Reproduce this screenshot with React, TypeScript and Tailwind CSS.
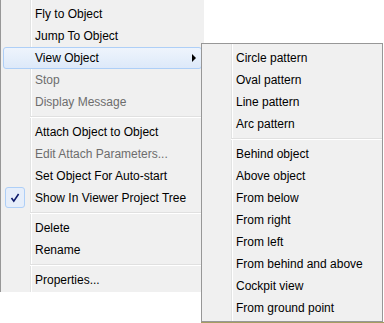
import React from "react";

type Item = { t?: string; dis?: boolean; hl?: boolean; sub?: boolean; check?: boolean; sep?: boolean };

const mainItems: Item[] = [
  { t: "Fly to Object" },
  { t: "Jump To Object" },
  { t: "View Object", hl: true, sub: true },
  { t: "Stop", dis: true },
  { t: "Display Message", dis: true },
  { sep: true },
  { t: "Attach Object to Object" },
  { t: "Edit Attach Parameters...", dis: true },
  { t: "Set Object For Auto-start" },
  { t: "Show In Viewer Project Tree", check: true },
  { sep: true },
  { t: "Delete" },
  { t: "Rename" },
  { sep: true },
  { t: "Properties..." },
];

const subItems: Item[] = [
  { t: "Circle pattern" },
  { t: "Oval pattern" },
  { t: "Line pattern" },
  { t: "Arc pattern" },
  { sep: true },
  { t: "Behind object" },
  { t: "Above object" },
  { t: "From below" },
  { t: "From right" },
  { t: "From left" },
  { t: "From behind and above" },
  { t: "Cockpit view" },
  { t: "From ground point" },
];

function Row({ it }: { it: Item }) {
  if (it.sep) {
    return (
      <div className="h-[8px] flex items-center pl-[29px]">
        <div className="w-full h-[2px] border-t border-t-[#e0e0e0] border-b border-b-white" />
      </div>
    );
  }
  return (
    <div
      className={
        "relative h-[22px] mx-[2px] rounded-[3px] border flex items-center pl-[31px] pr-[5px] " +
        (it.hl
          ? "border-[#aecff7] bg-[linear-gradient(to_bottom,#eef4fc,#dde9f9)]"
          : "border-transparent") +
        (it.dis ? " text-[#6d6d6d]" : " text-black")
      }
    >
      {it.check && (
        <div className="absolute left-[1px] top-[-1px] w-[20px] h-[21px] rounded-[3px] border border-[#aecff7] bg-[#e6eefa] flex items-center justify-center">
          <svg width="10" height="10" viewBox="0 0 10 10">
            <path d="M1.5 5 L3.8 8.2 L8.6 1" fill="none" stroke="#0d1a6b" strokeWidth="1.6" />
          </svg>
        </div>
      )}
      <span className="leading-none">{it.t}</span>
      {it.sub && (
        <svg className="ml-auto" width="4" height="8" viewBox="0 0 4 8">
          <path d="M0 0 L4 4 L0 8 Z" fill="#000" />
        </svg>
      )}
    </div>
  );
}

const gutterBg =
  "bg-[linear-gradient(to_right,#f0f0f0_29px,#e2e3e3_29px,#e2e3e3_30px,#ffffff_30px,#ffffff_31px,#f0f0f0_31px)]";

export default function App() {
  return (
    <div
      className="relative w-[384px] h-[323px] bg-white overflow-hidden text-[12px]"
      style={{ fontFamily: '"Liberation Sans", Arial, sans-serif' }}
    >
      <div className={"w-[204px] border-l border-l-[#979797] pt-[3px] pb-[1px] " + gutterBg}>
        {mainItems.map((it, i) => (
          <Row key={i} it={it} />
        ))}
      </div>
      <div className="absolute left-[201px] top-[43px] w-[183px] flex flex-col">
        <div className={"w-[182px] border border-[#979797] pt-[3px] pb-[2px] " + gutterBg}>
          {subItems.map((it, i) => (
            <Row key={i} it={it} />
          ))}
        </div>
        <div className="h-[1px] bg-[#a59d62]" />
      </div>
    </div>
  );
}
